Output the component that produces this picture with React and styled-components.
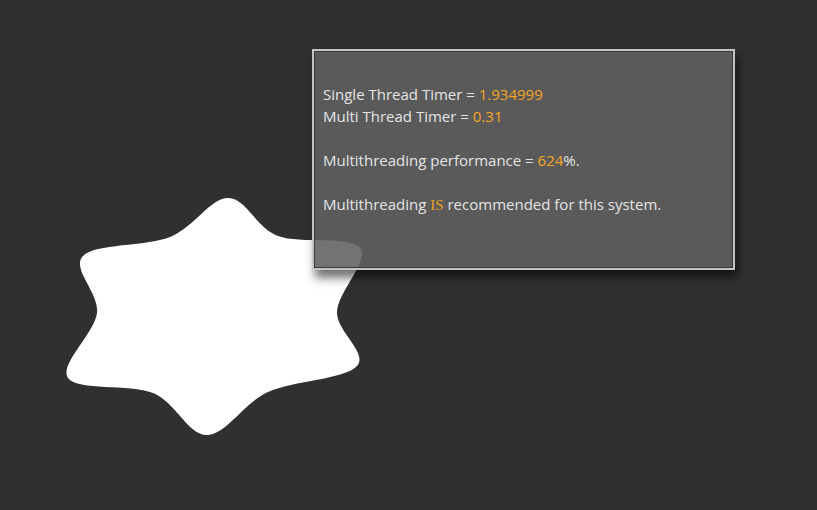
import React from "react";
import styled, { createGlobalStyle } from "styled-components";

const Global = createGlobalStyle`
  html, body { margin: 0; padding: 0; background: #303030; }
  body { width: 817px; height: 510px; overflow: hidden; }
  #root { width: 817px; height: 510px; }
`;

const Canvas = styled.div`
  position: relative;
  width: 817px;
  height: 510px;
  background: #303030;
  overflow: hidden;
`;

const StarSvg = styled.svg`
  position: absolute;
  left: 60px;
  top: 190px;
  width: 320px;
  height: 260px;
`;

const Panel = styled.div`
  position: absolute;
  left: 312px;
  top: 49px;
  width: 423px;
  height: 221px;
  box-sizing: border-box;
  border: 2px solid #c4c4c4;
  outline: 1px solid #3a3a3a;
  outline-offset: -3px;
  background: rgba(96, 96, 96, 0.88);
  box-shadow: 3px 8px 9px rgba(0, 0, 0, 0.55);
  padding: 10px 9px;
  font-family: "Open Sans", "Noto Sans", sans-serif;
  font-size: 15px;
  line-height: 22px;
  color: #e4e4e4;
`;

const Line = styled.div`
  height: 22px;
  white-space: pre;
`;

const Val = styled.span`
  color: ${(p) => (p.$serif ? "#e8a020" : "#f5a623")};
  font-family: ${(p) => (p.$serif ? '"Liberation Serif", serif' : "inherit")};
`;

const pts = [
  [228, 198],
  [278, 236],
  [360, 248],
  [337, 312],
  [357, 366],
  [268, 392],
  [207, 435],
  [153, 393],
  [68, 378],
  [97, 313],
  [83, 256],
  [170, 237],
];

function starPath(p) {
  const n = p.length;
  let d = `M${p[0][0]},${p[0][1]}`;
  for (let i = 0; i < n; i++) {
    const p0 = p[(i - 1 + n) % n];
    const p1 = p[i];
    const p2 = p[(i + 1) % n];
    const p3 = p[(i + 2) % n];
    const c1 = [p1[0] + (p2[0] - p0[0]) / 6, p1[1] + (p2[1] - p0[1]) / 6];
    const c2 = [p2[0] - (p3[0] - p1[0]) / 6, p2[1] - (p3[1] - p1[1]) / 6];
    d += ` C${c1[0].toFixed(1)},${c1[1].toFixed(1)} ${c2[0].toFixed(1)},${c2[1].toFixed(1)} ${p2[0]},${p2[1]}`;
  }
  return d + " Z";
}

export default function App() {
  return (
    <Canvas>
      <Global />
      <StarSvg viewBox="60 190 320 260">
        <path d={starPath(pts)} fill="#ffffff" />
      </StarSvg>
      <Panel>
        <Line> </Line>
        <Line>
          Single Thread Timer = <Val>1.934999</Val>
        </Line>
        <Line>
          Multi Thread Timer = <Val>0.31</Val>
        </Line>
        <Line> </Line>
        <Line>
          Multithreading performance = <Val>624</Val>%.
        </Line>
        <Line> </Line>
        <Line>
          Multithreading <Val $serif>IS</Val> recommended for this system.
        </Line>
      </Panel>
    </Canvas>
  );
}
